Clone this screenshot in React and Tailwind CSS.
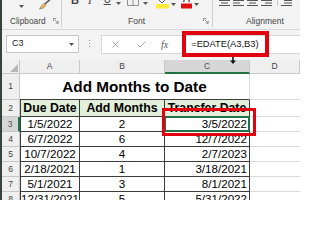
import React from "react";

function Caret({ className = "" }) {
  return (
    <svg width="5" height="3" viewBox="0 0 5 3" className={className}>
      <path d="M0 0H5L2.5 3Z" fill="#555" />
    </svg>
  );
}

function Launcher() {
  return (
    <svg width="6" height="6" viewBox="0 0 6 6" fill="none" stroke="#7a7a7a" strokeWidth="0.8">
      <path d="M0.5 3V0.5H3" />
      <path d="M1.8 1.8L5.2 5.2M5.2 2.8V5.2H2.8" />
    </svg>
  );
}

function AlignIcon({ lines }) {
  return (
    <svg width="11" height="8" viewBox="0 0 11 8" stroke="#555" strokeWidth="1">
      {lines.map(([x1, x2], i) => (
        <line key={i} x1={x1} x2={x2} y1={0.5 + i * 2.5} y2={0.5 + i * 2.5} />
      ))}
    </svg>
  );
}

const data = [
  ["1/5/2022", "2", "3/5/2022"],
  ["6/7/2022", "6", "12/7/2022"],
  ["10/7/2022", "4", "2/7/2023"],
  ["2/18/2021", "1", "3/18/2021"],
  ["5/1/2021", "3", "8/1/2021"],
  ["12/31/2021", "5", "5/31/2022"],
];

const hdr = "bg-[#efefef] border-r border-b border-[#c8c8c8] flex items-center justify-center text-[8.5px] text-[#444]";
const rowHdr = "bg-[#efefef] border-r border-b border-[#c8c8c8] flex items-center justify-center text-[8.5px] text-[#444]";
const dark = "border-[#3c3c3c]";

export default function App() {
  return (
    <div className="w-[300px] h-[200px] overflow-hidden flex bg-[#f3f3f3] relative font-['Liberation_Sans',Arial,sans-serif] text-black">
      <div className="w-[2px] shrink-0 bg-[#37423b]" />
      <div className="flex-1 flex flex-col min-w-0">
        {/* Ribbon */}
        <div className="h-[30px] shrink-0 border-b border-[#d6d6d6] flex">
          {/* Clipboard */}
          <div className="w-[60px] flex flex-col justify-between border-r border-[#d0d0d0] mb-[2px]">
            <div className="h-[10px] flex items-start">
              <Caret className="ml-[17px] mt-[5px]" />
              <svg width="13" height="10" viewBox="0 0 13 10" className="ml-[14px]">
                <path d="M7 4L12.5 -1" stroke="#555" strokeWidth="1.6" />
                <path d="M1.5 9L3 6.5L6 3.2L8.2 5.2L5 8.2Z" fill="#e6b56a" stroke="#8a6a3a" strokeWidth="0.6" />
              </svg>
            </div>
            <div className="h-[10px] flex items-center mb-[1px]">
              <span className="ml-[8px] text-[8.3px] leading-[10px] text-[#444]">Clipboard</span>
              <span className="ml-auto mr-[2px] flex"><Launcher /></span>
            </div>
          </div>
          {/* Font */}
          <div className="w-[151px] flex flex-col justify-between border-r border-[#d0d0d0] mb-[2px]">
            <div className="h-[10px] flex items-start overflow-hidden">
              <span className="ml-[9px] -mt-[5px] text-[11px] leading-[11px] font-bold text-[#444]">B</span>
              <span className="ml-[9px] -mt-[5px] text-[11px] leading-[11px] italic text-[#444] font-['Liberation_Serif',serif]">I</span>
              <span className="ml-[12px] -mt-[6px] text-[10px] leading-[11px] text-[#444] underline">U</span>
              <Caret className="ml-[5px] mt-[2px]" />
              <svg width="12" height="6" viewBox="0 0 12 6" className="ml-[6px]" fill="none" stroke="#777" strokeWidth="0.8">
                <path d="M0.5 0V5.5H11.5V0M6 0V5.5" />
              </svg>
              <Caret className="ml-[4px] mt-[2px]" />
              <svg width="13" height="9" viewBox="0 0 13 9" className="ml-[8px]">
                <path d="M3 0L6 3L9 0" fill="none" stroke="#666" strokeWidth="1" />
                <rect x="0" y="4" width="13" height="4.5" fill="#ffeb3b" />
              </svg>
              <Caret className="ml-[2px] mt-[3px]" />
              <svg width="11" height="9" viewBox="0 0 11 9" className="ml-[5px]">
                <path d="M2.5 2L3.3 0M8.5 2L7.7 0" stroke="#444" strokeWidth="1.2" />
                <rect x="0" y="3.5" width="11" height="5" fill="#e01010" />
              </svg>
              <Caret className="ml-[2px] mt-[3px]" />
            </div>
            <div className="h-[10px] flex items-center mb-[1px]">
              <span className="ml-[66px] text-[8.5px] leading-[10px] text-[#444]">Font</span>
              <span className="ml-auto mr-[3px] flex"><Launcher /></span>
            </div>
          </div>
          {/* Alignment */}
          <div className="flex-1 flex flex-col justify-between mb-[2px]">
            <div className="h-[10px] flex items-start gap-[3px] pl-[6px]">
              <AlignIcon lines={[[0, 11], [2, 9], [0, 11]]} />
              <AlignIcon lines={[[0, 11], [0, 7], [0, 11]]} />
              <AlignIcon lines={[[0, 11], [2, 9], [0, 11]]} />
              <AlignIcon lines={[[0, 11], [4, 11], [0, 11]]} />
              <span className="w-[1px] h-[6px] bg-[#c8c8c8] ml-[2px]" />
              <AlignIcon lines={[[3, 11], [3, 11], [0, 11]]} />
            </div>
            <div className="h-[10px] flex items-center mb-[1px]">
              <span className="ml-[33px] text-[8.5px] leading-[10px] text-[#444]">Alignment</span>
            </div>
          </div>
        </div>

        {/* Formula bar */}
        <div className="h-[30px] shrink-0 flex items-start pt-[5px]">
          <div className="ml-[4px] w-[73px] h-[18px] bg-white border border-[#c6c6c6] flex items-center pl-[5px] pr-[4px]">
            <span className="text-[9px] text-[#222]">C3</span>
            <Caret className="ml-auto" />
          </div>
          <div className="ml-[10px] mt-[5px] flex flex-col gap-[2px]">
            <span className="w-[1px] h-[1px] bg-[#999]" />
            <span className="w-[1px] h-[1px] bg-[#999]" />
            <span className="w-[1px] h-[1px] bg-[#999]" />
          </div>
          <div className="ml-[11px] flex-1 h-[19px] bg-white border-l border-y border-[#d6d6d6] flex items-center">
            <svg width="7" height="7" viewBox="0 0 7 7" className="ml-[10px]" stroke="#a8a8a8" strokeWidth="1">
              <path d="M0.5 0.5L6.5 6.5M6.5 0.5L0.5 6.5" />
            </svg>
            <svg width="9" height="7" viewBox="0 0 9 7" className="ml-[18px]" fill="none" stroke="#a8a8a8" strokeWidth="1">
              <path d="M0.5 3.5L3 6L8.5 0.5" />
            </svg>
            <span className="ml-[15px] text-[10px] italic text-[#555] font-['Liberation_Serif',serif]">fx</span>
            <span className="ml-[23px] text-[9.3px] text-[#111]">=EDATE(A3,B3)</span>
          </div>
        </div>

        {/* Sheet */}
        <div className="grid grid-cols-[18px_60px_85px_85px_50px] grid-rows-[14px_26px_17px_15px_15px_15px_15px_15px_15px] bg-white">
          <div className={`${hdr} relative`}>
            <svg width="8" height="8" viewBox="0 0 8 8" className="absolute right-[1px] bottom-[1px]">
              <path d="M8 0V8H0Z" fill="#b8b8b8" />
            </svg>
          </div>
          <div className={hdr}>A</div>
          <div className={hdr}>B</div>
          <div className="bg-[#d6d6d6] border-r border-[#c8c8c8] border-b-2 border-b-[#217346] flex items-center justify-center text-[8.5px] text-[#555]">C</div>
          <div className={hdr}>D</div>

          {/* Row 1 */}
          <div className={rowHdr}>1</div>
          <div className={`col-span-3 border-b ${dark} border-r border-r-[#d9d9d9] flex items-center justify-center pt-[2px] text-[15.3px] font-bold`}>
            Add Months to Date
          </div>
          <div className="border-b border-[#d9d9d9]" />

          {/* Row 2 */}
          <div className={rowHdr}>2</div>
          <div className={`bg-[#e2efda] border-l border-r border-b ${dark} flex items-center justify-center pt-[1px] text-[12.3px] font-bold`}>Due Date</div>
          <div className={`bg-[#e2efda] border-r border-b ${dark} flex items-center justify-center pt-[1px] text-[12.3px] font-bold`}>Add Months</div>
          <div className={`bg-[#e2efda] border-r border-b ${dark} flex items-center justify-center pt-[1px] text-[12.3px] font-bold whitespace-nowrap`}>Transfer Date</div>
          <div className="border-b border-[#d9d9d9]" />

          {data.map((r, i) => (
            <React.Fragment key={i}>
              {i === 0 ? (
                <div className="bg-[#d6d6d6] border-b border-[#c8c8c8] border-r-2 border-r-[#217346] flex items-center justify-center text-[8.5px] text-[#555]">3</div>
              ) : (
                <div className={rowHdr}>{i + 3}</div>
              )}
              <div className={`border-l border-r border-b ${dark} flex items-center justify-center text-[11.6px]`}>{r[0]}</div>
              <div className={`border-r border-b ${dark} flex items-center justify-center text-[11.6px]`}>{r[1]}</div>
              <div className={`border-r border-b ${dark} flex items-center justify-end pr-[2px] text-[11.6px] relative`}>
                {i === 0 && <div className="absolute -left-px -top-px -right-px -bottom-px border-2 border-[#217346]" />}
                <span className="relative">{r[2]}</span>
              </div>
              <div className="border-b border-[#d9d9d9]" />
            </React.Fragment>
          ))}
        </div>
      </div>

      {/* Red highlight boxes */}
      <div className="absolute left-[182px] top-[31px] w-[87px] h-[26px] border-4 border-[#e3000f]" />
      <div className="absolute left-[162px] top-[108px] w-[94px] h-[28px] border-[3px] border-[#e3000f]" />
      {/* column-select cursor */}
      <svg width="6" height="7" viewBox="0 0 6 7" className="absolute left-[230px] top-[57px]">
        <path d="M2.2 0H3.8V3.5H6L3 7L0 3.5H2.2Z" fill="#111" />
      </svg>
    </div>
  );
}
